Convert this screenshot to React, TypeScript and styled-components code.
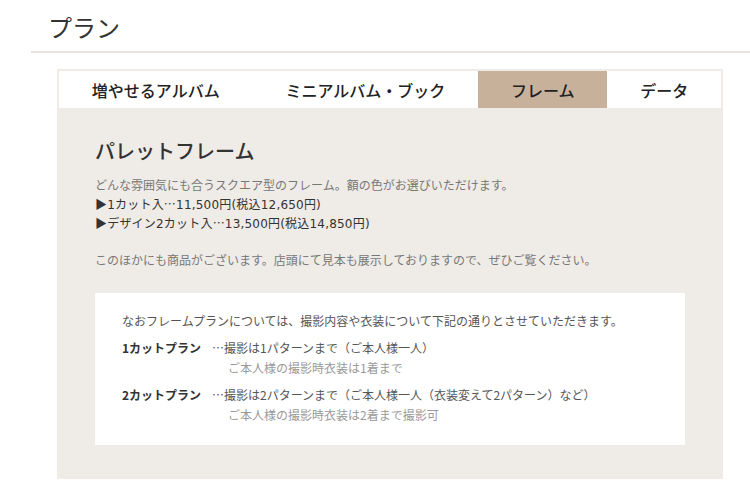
import React from "react";
import styled, { createGlobalStyle } from "styled-components";

const GlobalStyle = createGlobalStyle`
  body {
    margin: 0;
    background: #fff;
    font-family: "Noto Sans CJK JP", "Noto Sans", sans-serif;
    color: #333;
  }
`;

const SPage = styled.div`
  width: 750px;
  padding-left: 31px;
  box-sizing: border-box;
`;

const SHeader = styled.header`
  height: 53px;
  border-bottom: 2px solid #e6e3db;
  padding-left: 17px;
  box-sizing: border-box;
`;

const STitle = styled.h1`
  margin: 0;
  padding-top: 10px;
  font-size: 24px;
  line-height: 34px;
  font-weight: 400;
  color: #333;
`;

const SPanel = styled.section`
  margin: 16px 27px 0 26px;
  background: #efebe7;
  padding: 2px 2px 34px;
`;

const STabs = styled.ul`
  display: flex;
  margin: 0;
  padding: 0;
  list-style: none;
  background: #fff;
`;

const STab = styled.li<{ $active?: boolean }>`
  flex: auto;
  height: 37px;
  display: flex;
  align-items: center;
  justify-content: center;
  font-size: 16px;
  font-weight: 500;
  color: #222;
  background: ${(p) => (p.$active ? "#c8b19b" : "#fff")};
`;

const SBody = styled.div`
  padding: 29px 36px 0;
`;

const SH2 = styled.h2`
  margin: 0 0 10px;
  font-size: 20px;
  line-height: 28px;
  font-weight: 500;
  color: #333;
`;

const SDesc = styled.div`
  font-size: 12px;
  line-height: 19px;

  & + & {
    margin-top: 18px;
  }
`;

const SLine = styled.div<{ $price?: boolean }>`
  height: 19px;
  white-space: nowrap;
  color: ${(p) => (p.$price ? "#333" : "#777")};
  letter-spacing: ${(p) => (p.$price ? "0.2px" : "0")};
  font-family: ${(p) =>
    p.$price
      ? `"DejaVu Sans", "Noto Sans CJK JP", sans-serif`
      : `"Noto Sans CJK JP", sans-serif`};
`;

const SWide = styled.span`
  font-family: "Noto Sans CJK JP", sans-serif;
`;

const SInfo = styled.div`
  margin-top: 24px;
  background: #fff;
  padding: 18px 27px 20px;
`;

const SLead = styled.p`
  margin: 0 0 7px;
  font-size: 12px;
  line-height: 20px;
  color: #555;
`;

const SPlan = styled.div`
  display: grid;
  grid-template-columns: 90px 1fr;
  font-size: 12px;
  line-height: 20px;

  & + & {
    margin-top: 7px;
  }
`;

const SPlanName = styled.div`
  font-weight: 700;
  color: #333;
`;

const SPlanText = styled.div`
  color: #555;
`;

const SPlanSub = styled.div`
  padding-left: 16px;
  color: #999;
`;

const tabs = ["増やせるアルバム", "ミニアルバム・ブック", "フレーム", "データ"];

const prices = [
  { label: "1カット入", price: "11,500円(税込12,650円)" },
  { label: "デザイン2カット入", price: "13,500円(税込14,850円)" },
];

const plans = [
  {
    name: "1カットプラン",
    text: "…撮影は1パターンまで（ご本人様一人）",
    sub: "ご本人様の撮影時衣装は1着まで",
  },
  {
    name: "2カットプラン",
    text: "…撮影は2パターンまで（ご本人様一人（衣装変えて2パターン）など）",
    sub: "ご本人様の撮影時衣装は2着まで撮影可",
  },
];

export default function App() {
  return (
    <>
      <GlobalStyle />
      <SPage>
        <SHeader>
          <STitle>プラン</STitle>
        </SHeader>

        <SPanel>
          <STabs>
            {tabs.map((t) => (
              <STab key={t} $active={t === "フレーム"}>
                {t}
              </STab>
            ))}
          </STabs>

          <SBody>
            <SH2>パレットフレーム</SH2>
            <SDesc>
              <SLine>どんな雰囲気にも合うスクエア型のフレーム。額の色がお選びいただけます。</SLine>
              {prices.map((p) => (
                <SLine key={p.label} $price>
                  <SWide>▶</SWide>
                  {p.label}
                  <SWide>…</SWide>
                  {p.price}
                </SLine>
              ))}
            </SDesc>
            <SDesc>
              <SLine>このほかにも商品がございます。店頭にて見本も展示しておりますので、ぜひご覧ください。</SLine>
            </SDesc>

            <SInfo>
              <SLead>
                なおフレームプランについては、撮影内容や衣装について下記の通りとさせていただきます。
              </SLead>
              {plans.map((p) => (
                <SPlan key={p.name}>
                  <SPlanName>{p.name}</SPlanName>
                  <div>
                    <SPlanText>{p.text}</SPlanText>
                    <SPlanSub>{p.sub}</SPlanSub>
                  </div>
                </SPlan>
              ))}
            </SInfo>
          </SBody>
        </SPanel>
      </SPage>
    </>
  );
}
